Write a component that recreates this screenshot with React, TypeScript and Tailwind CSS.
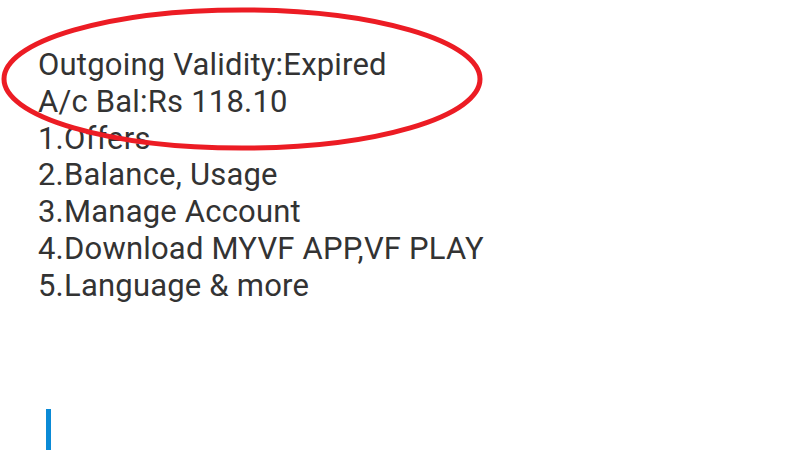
const LINES = [
  "Outgoing Validity:Expired",
  "A/c Bal:Rs 118.10",
  "1.Offers",
  "2.Balance, Usage",
  "3.Manage Account",
  "4.Download MYVF APP,VF PLAY",
  "5.Language & more",
];

export default function App() {
  return (
    <div className="relative h-[450px] w-[800px] overflow-hidden bg-white font-['Roboto',sans-serif] text-[#333333]">
      <div className="pl-[38px] pt-[47px] text-[31px] leading-[36.8px] tracking-[0.2px]">
        {LINES.map((line) => (
          <div key={line}>{line}</div>
        ))}
      </div>
      <div className="absolute left-[46px] top-[409px] h-[41px] w-[5px] bg-[#0a8ad6]" />
      <svg className="absolute left-0 top-0" width="800" height="450">
        <ellipse cx="242" cy="79" rx="238" ry="69" fill="none" stroke="#ec1c24" strokeWidth="5" />
      </svg>
    </div>
  );
}
